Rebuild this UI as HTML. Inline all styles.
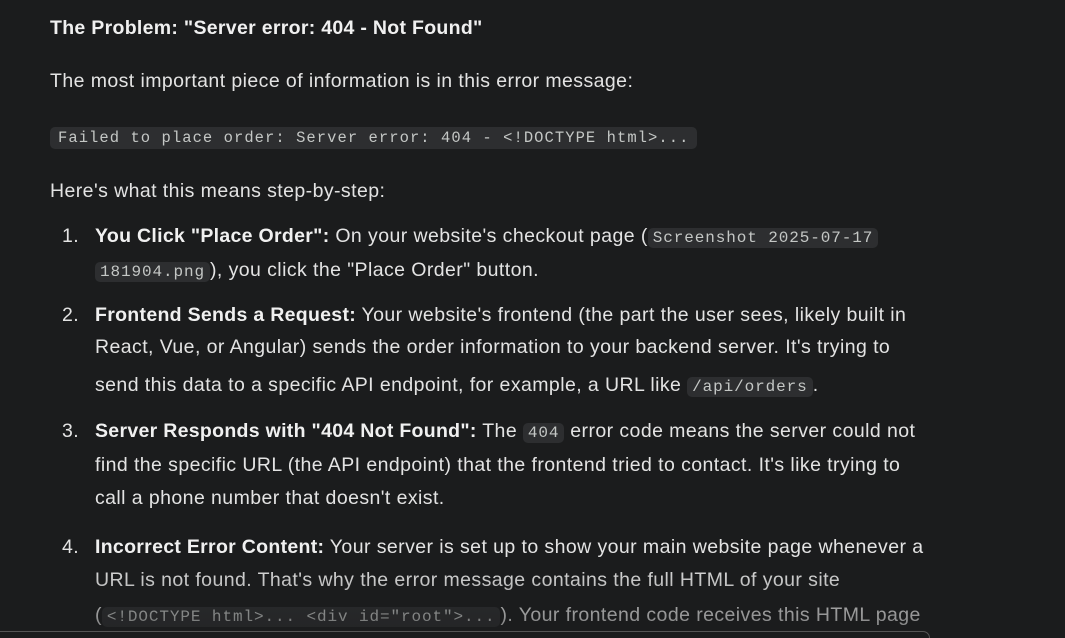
<!DOCTYPE html>
<html><head><style>
html,body{margin:0;padding:0;width:1065px;height:638px;overflow:hidden;background:#1b1c1d;}
body{font-family:"Liberation Sans",sans-serif;font-size:19.5px;letter-spacing:0.42px;color:#e3e3e3;position:relative;}
.l{position:absolute;white-space:nowrap;line-height:24px;}
b{font-weight:bold;color:#f0f0f0;letter-spacing:0.3px;}
code{font-family:"Liberation Mono",monospace;font-size:16px;background:#2d2e30;color:#c4c7c5;border-radius:5px;padding:1px 5px;letter-spacing:0.9px;}
.fade{position:absolute;left:0;top:560px;width:1065px;height:78px;background:linear-gradient(to bottom,rgba(27,28,29,0),rgba(27,28,29,0.55));}
.box{position:absolute;left:-20px;top:631px;width:948px;height:6px;border:1px solid #555;border-bottom:none;border-radius:24px 24px 0 0;background:#1b1c1d;}
</style></head><body>
<div class="l" style="left:50px;top:16px"><b>The Problem: "Server error: 404 - Not Found"</b></div>
<div class="l" style="left:50px;top:69px">The most important piece of information is in this error message:</div>
<div class="l" style="left:50px;top:124px"><code style="padding:2px 8px;font-size:15.5px;letter-spacing:1.05px">Failed to place order: Server error: 404 - &lt;!DOCTYPE html&gt;...</code></div>
<div class="l" style="left:50px;top:179px">Here's what this means step-by-step:</div>

<div class="l" style="left:62px;top:224px">1.</div>
<div class="l" style="left:95px;top:224px"><b>You Click "Place Order":</b> On your website's checkout page (<code>Screenshot 2025-07-17 </code></div>
<div class="l" style="left:95px;top:258px"><code>181904.png</code>), you click the "Place Order" button.</div>

<div class="l" style="left:62px;top:303px">2.</div>
<div class="l" style="left:95px;top:303px"><b>Frontend Sends a Request:</b> Your website's frontend (the part the user sees, likely built in</div>
<div class="l" style="left:95px;top:335px">React, Vue, or Angular) sends the order information to your backend server. It's trying to</div>
<div class="l" style="left:95px;top:373px">send this data to a specific API endpoint, for example, a URL like <code>/api/orders</code>.</div>

<div class="l" style="left:62px;top:419px">3.</div>
<div class="l" style="left:95px;top:419px"><b>Server Responds with "404 Not Found":</b> The <code>404</code> error code means the server could not</div>
<div class="l" style="left:95px;top:453px">find the specific URL (the API endpoint) that the frontend tried to contact. It's like trying to</div>
<div class="l" style="left:95px;top:486px">call a phone number that doesn't exist.</div>

<div class="l" style="left:62px;top:535px">4.</div>
<div class="l" style="left:95px;top:535px"><b>Incorrect Error Content:</b> Your server is set up to show your main website page whenever a</div>
<div class="l" style="left:95px;top:568px">URL is not found. That's why the error message contains the full HTML of your site</div>
<div class="l" style="left:95px;top:603px">(<code>&lt;!DOCTYPE html&gt;... &lt;div id="root"&gt;...</code>). Your frontend code receives this HTML page</div>
<div class="fade"></div>
<div class="box"></div>
</body></html>
